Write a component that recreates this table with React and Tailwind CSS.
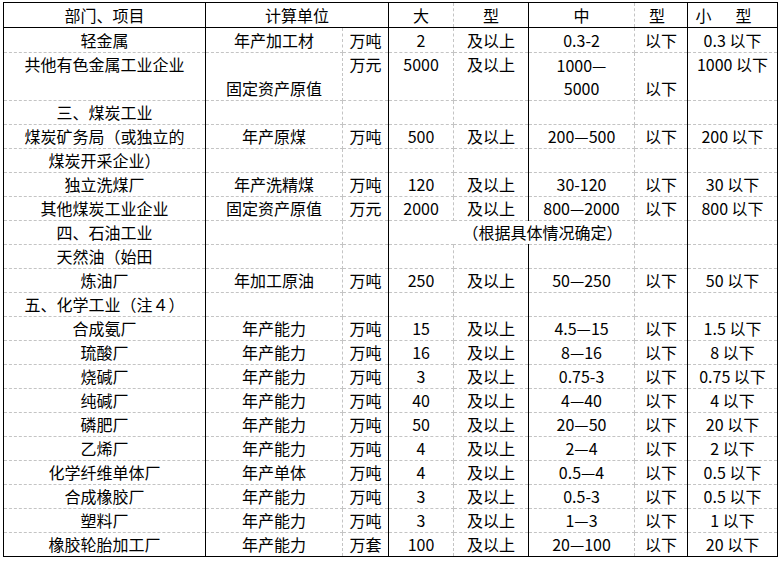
import React from 'react'

const rows = [
  ['轻金属', '年产加工材', '万吨', '2', '及以上', '0.3-2', '以下', '0.3 以下'],
  null, // 共他有色金属 — two-line row, drawn by hand below
  ['三、煤炭工业', '', '', '', '', '', '', ''],
  ['煤炭矿务局（或独立的', '年产原煤', '万吨', '500', '及以上', '200—500', '以下', '200 以下'],
  ['煤炭开采企业）', '', '', '', '', '', '', ''],
  ['独立洗煤厂', '年产洗精煤', '万吨', '120', '及以上', '30-120', '以下', '30 以下'],
  ['其他煤炭工业企业', '固定资产原值', '万元', '2000', '及以上', '800—2000', '以下', '800 以下'],
  'oil',
  ['天然油（始田', '', '', '', '', '', '', ''],
  ['炼油厂', '年加工原油', '万吨', '250', '及以上', '50—250', '以下', '50 以下'],
  ['五、化学工业（注４）', '', '', '', '', '', '', ''],
  ['合成氨厂', '年产能力', '万吨', '15', '及以上', '4.5—15', '以下', '1.5 以下'],
  ['琉酸厂', '年产能力', '万吨', '16', '及以上', '8—16', '以下', '8 以下'],
  ['烧碱厂', '年产能力', '万吨', '3', '及以上', '0.75-3', '以下', '0.75 以下'],
  ['纯碱厂', '年产能力', '万吨', '40', '及以上', '4—40', '以下', '4 以下'],
  ['磷肥厂', '年产能力', '万吨', '50', '及以上', '20—50', '以下', '20 以下'],
  ['乙烯厂', '年产能力', '万吨', '4', '及以上', '2—4', '以下', '2 以下'],
  ['化学纤维单体厂', '年产单体', '万吨', '4', '及以上', '0.5—4', '以下', '0.5 以下'],
  ['合成橡胶厂', '年产能力', '万吨', '3', '及以上', '0.5-3', '以下', '0.5 以下'],
  ['塑料厂', '年产能力', '万吨', '3', '及以上', '1—3', '以下', '1 以下'],
  ['橡胶轮胎加工厂', '年产能力', '万套', '100', '及以上', '20—100', '以下', '20 以下'],
]

const cell = 'border border-dashed border-[#c4c4c4] p-0 text-center whitespace-nowrap leading-[23px]'

export default function App() {
  return (
    <div className="min-h-screen bg-white pl-[3px] pt-[2px] text-black text-[16px]" style={{ fontFamily: '"Noto Sans CJK SC", "Noto Sans", sans-serif' }}>
      <table className="table-fixed w-[775px] border-collapse border border-black">
        <colgroup>
          <col className="w-[202px] border-r border-black" />
          <col className="w-[137px]" />
          <col className="w-[46px] border-r border-black" />
          <col className="w-[65px]" />
          <col className="w-[75px] border-r border-black" />
          <col className="w-[106px]" />
          <col className="w-[53px] border-r border-black" />
          <col className="w-[90px] border-r border-black" />
        </colgroup>
        <thead>
          <tr className="h-[25px] border-b border-black">
            <th className={cell + ' font-normal'}>部门、项目</th>
            <th colSpan={2} className={cell + ' font-normal'}>计算单位</th>
            <th className={cell + ' font-normal'}>大</th>
            <th className={cell + ' font-normal'}>型</th>
            <th className={cell + ' font-normal'}>中</th>
            <th className={cell + ' font-normal pr-[8px]'}>型</th>
            <th className={cell + ' font-normal pr-[18px]'}>
              <span>小</span>
              <span className="ml-[24px]">型</span>
            </th>
          </tr>
        </thead>
        <tbody>
          {rows.map((r, i) => {
            if (r === null) {
              return (
                <tr key={i} className="h-[48px]">
                  <td className={cell + ' align-top'}>共他有色金属工业企业</td>
                  <td className={cell + ' align-bottom'}>固定资产原值</td>
                  <td className={cell + ' align-top'}>万元</td>
                  <td className={cell + ' align-top'}>5000</td>
                  <td className={cell + ' align-top'}>及以上</td>
                  <td className={cell}>1000—<br />5000</td>
                  <td className={cell + ' align-bottom'}>以下</td>
                  <td className={cell + ' align-top'}>1000 以下</td>
                </tr>
              )
            }
            if (r === 'oil') {
              return (
                <tr key={i} className="h-[24px]">
                  <td className={cell}>四、石油工业</td>
                  <td className={cell}></td>
                  <td className={cell}></td>
                  <td colSpan={3} className={cell + ' pl-[62px]'}>（根据具体情况确定）</td>
                  <td className={cell}></td>
                  <td className={cell}></td>
                </tr>
              )
            }
            return (
              <tr key={i} className={i === 0 ? 'h-[25px]' : 'h-[24px]'}>
                {r.map((t, j) => (
                  <td key={j} className={cell}>{t}</td>
                ))}
              </tr>
            )
          })}
        </tbody>
      </table>
    </div>
  )
}
